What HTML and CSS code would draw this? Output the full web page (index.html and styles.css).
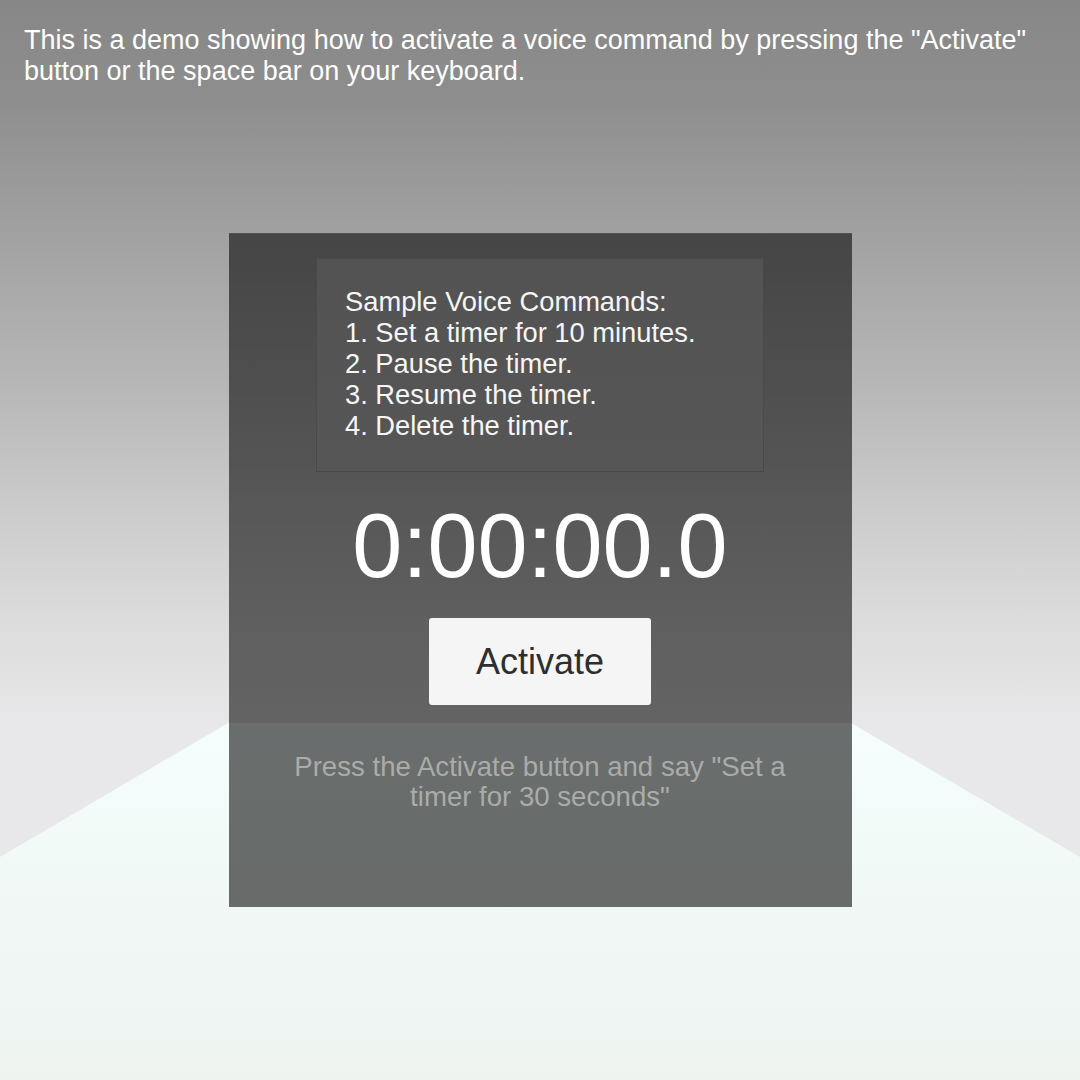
FILE: index.html
```html
<!DOCTYPE html>
<html lang="en">
<head>
<meta charset="utf-8">
<title>Voice Command Timer Demo</title>
<link rel="stylesheet" href="styles.css">
</head>
<body>
<div class="scene">
  <div class="floor"></div>
  <main class="page">
    <p class="intro">This is a demo showing how to activate a voice command by pressing the "Activate" button or the space bar on your keyboard.</p>
    <section class="panel">
      <div class="commands">
        <p>Sample Voice Commands:</p>
        <p>1. Set a timer for 10 minutes.</p>
        <p>2. Pause the timer.</p>
        <p>3. Resume the timer.</p>
        <p>4. Delete the timer.</p>
      </div>
      <div class="timer">0:00:00.0</div>
      <button class="activate" type="button">Activate</button>
      <p class="hint">Press the Activate button and say "Set a timer for 30 seconds"</p>
    </section>
  </main>
</div>
</body>
</html>
```
FILE: styles.css
```css
html, body {
  margin: 0;
  padding: 0;
}

body {
  width: 1080px;
  height: 1080px;
  overflow: hidden;
  font-family: "Liberation Sans", Arial, sans-serif;
}

.scene {
  position: relative;
  width: 1080px;
  height: 1080px;
  background: linear-gradient(to bottom,
    #878787 0px,
    #8e8e8e 100px,
    #a1a1a1 230px,
    #b6b6b6 380px,
    #cacaca 500px,
    #dcdcdc 620px,
    #e8e7e9 723px,
    #e8e7e9 1080px);
}

.floor {
  position: absolute;
  left: 0;
  top: 0;
  width: 1080px;
  height: 1080px;
  background: linear-gradient(to bottom,
    #f4fefd 723px,
    #f1f9f6 880px,
    #eef3f0 1080px);
  clip-path: polygon(228px 723px, 851px 723px, 1080px 857px, 1080px 1080px, 0 1080px, 0 857px);
}

.page {
  position: relative;
  display: flex;
  flex-direction: column;
  align-items: center;
  padding: 25px 24px 0 24px;
  height: 1080px;
  box-sizing: border-box;
}

.intro {
  align-self: stretch;
  margin: 0;
  color: #ffffff;
  font-size: 27px;
  line-height: 31px;
}

.panel {
  margin-top: 146px;
  width: 623px;
  height: 674px;
  box-sizing: border-box;
  background: rgba(0, 0, 0, 0.57);
  border-top: 1px solid rgba(255, 255, 255, 0.08);
  display: flex;
  flex-direction: column;
  align-items: center;
  padding-top: 24px;
}

.commands {
  width: 448px;
  height: 214px;
  box-sizing: border-box;
  background: linear-gradient(to bottom, #535353, #565656);
  border: 1px solid rgba(0, 0, 0, 0.13);
  padding: 27px 10px 0 28px;
  color: #f6f6f6;
  font-size: 27.3px;
  line-height: 31px;
}

.commands p {
  margin: 0;
  white-space: nowrap;
}

.timer {
  margin-top: 29px;
  color: #ffffff;
  font-size: 90px;
  line-height: 90px;
  height: 90px;
}

.activate {
  margin-top: 27px;
  width: 222px;
  height: 87px;
  border: none;
  border-radius: 3px;
  background: #f5f5f5;
  color: #2e2e2e;
  font-family: "Liberation Sans", Arial, sans-serif;
  font-size: 36px;
  line-height: 36px;
  padding: 0;
  display: flex;
  align-items: center;
  justify-content: center;
}

.hint {
  margin: 47px 0 0;
  width: 530px;
  text-align: center;
  color: #aaacaa;
  font-size: 27.6px;
  line-height: 30px;
}
```
